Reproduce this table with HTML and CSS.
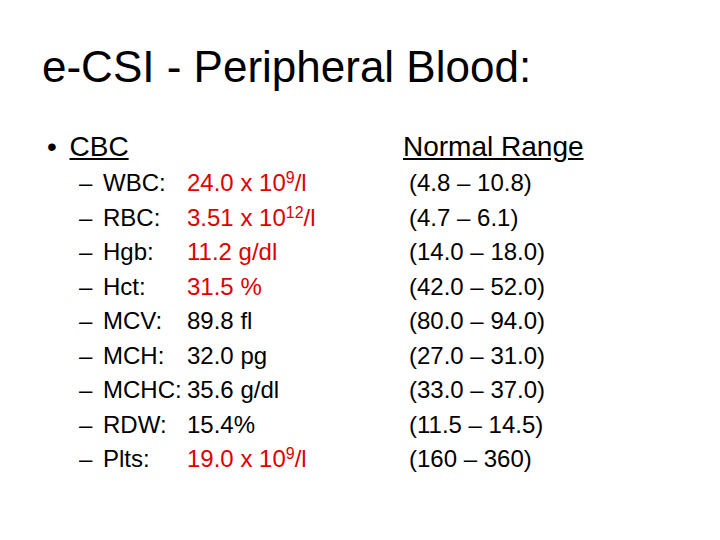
FILE: index.html
```html
<!DOCTYPE html>
<html lang="en">
<head>
<meta charset="utf-8">
<title>e-CSI - Peripheral Blood</title>
<link rel="stylesheet" href="styles.css">
</head>
<body>
<div class="slide">
  <h1 class="title">e-CSI - Peripheral Blood:</h1>
  <div class="head">
    <span class="bullet">•</span>
    <span class="cbc">CBC</span>
    <span class="nr">Normal Range</span>
  </div>
  <ul class="rows">
    <li class="row"><span class="dash">–</span><span class="label">WBC:</span><span class="val red">24.0 x 10<sup>9</sup>/l</span><span class="range">(4.8 – 10.8)</span></li>
    <li class="row"><span class="dash">–</span><span class="label">RBC:</span><span class="val red">3.51 x 10<sup>12</sup>/l</span><span class="range">(4.7 – 6.1)</span></li>
    <li class="row"><span class="dash">–</span><span class="label">Hgb:</span><span class="val red">11.2 g/dl</span><span class="range">(14.0 – 18.0)</span></li>
    <li class="row"><span class="dash">–</span><span class="label">Hct:</span><span class="val red">31.5 %</span><span class="range">(42.0 – 52.0)</span></li>
    <li class="row"><span class="dash">–</span><span class="label">MCV:</span><span class="val">89.8 fl</span><span class="range">(80.0 – 94.0)</span></li>
    <li class="row"><span class="dash">–</span><span class="label">MCH:</span><span class="val">32.0 pg</span><span class="range">(27.0 – 31.0)</span></li>
    <li class="row"><span class="dash">–</span><span class="label">MCHC:</span><span class="val">35.6 g/dl</span><span class="range">(33.0 – 37.0)</span></li>
    <li class="row"><span class="dash">–</span><span class="label">RDW:</span><span class="val">15.4%</span><span class="range">(11.5 – 14.5)</span></li>
    <li class="row"><span class="dash">–</span><span class="label">Plts:</span><span class="val red">19.0 x 10<sup>9</sup>/l</span><span class="range">(160 – 360)</span></li>
  </ul>
</div>
</body>
</html>
```
FILE: styles.css
```css
html, body {
  margin: 0;
  padding: 0;
  background: #ffffff;
}

.slide {
  width: 720px;
  height: 540px;
  box-sizing: border-box;
  padding-top: 41px;
  font-family: "Liberation Sans", Arial, sans-serif;
  color: #000000;
  display: flex;
  flex-direction: column;
}

.title {
  margin: 0 0 37px 0;
  padding-left: 42px;
  font-size: 44px;
  line-height: 52px;
  font-weight: normal;
}

.head {
  display: flex;
  font-size: 28px;
  line-height: 34px;
  padding-left: 47px;
  margin-bottom: 2px;
}

.bullet {
  width: 22.5px;
}

.cbc {
  width: 333.5px;
  text-decoration: underline;
}

.nr {
  text-decoration: underline;
}

.rows {
  list-style: none;
  margin: 0;
  padding: 0 0 0 79px;
  font-size: 24px;
  line-height: 34.5px;
}

.row {
  display: grid;
  grid-template-columns: 24px 84px 222px auto;
}

.label {
  white-space: nowrap;
}

.val {
  white-space: nowrap;
}

.red {
  color: #dd0000;
}

.val sup {
  font-size: 16px;
  line-height: 0;
  vertical-align: 8px;
}
```
